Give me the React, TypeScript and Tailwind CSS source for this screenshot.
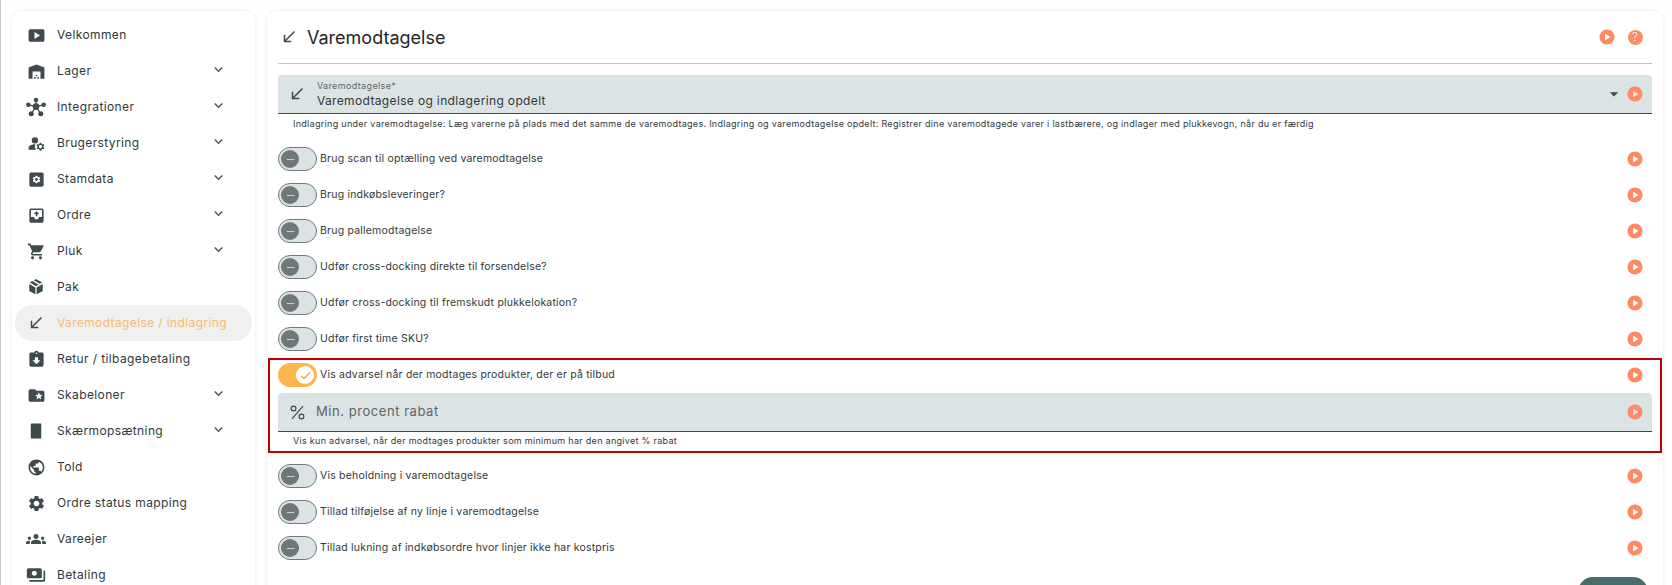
import type { ReactNode } from "react"
import {
  MdSmartDisplay,
  MdWarehouse,
  MdManageAccounts,
  MdShoppingCart,
  MdCallReceived,
  MdAssignmentReturned,
  MdFolderSpecial,
  MdPublic,
  MdSettings,
  MdGroups,
  MdPayments,
  MdRemove,
  MdCheck,
  MdPlayCircle,
  MdExpandMore,
  MdArrowDropDown,
} from "react-icons/md"

const gearPath =
  "M19.14 12.94c.04-.3.06-.61.06-.94 0-.32-.02-.64-.07-.94l2.03-1.58c.18-.14.23-.41.12-.61l-1.92-3.32c-.12-.22-.37-.29-.59-.22l-2.39.96c-.5-.38-1.03-.7-1.62-.94l-.36-2.54c-.04-.24-.24-.41-.48-.41h-3.84c-.24 0-.43.17-.47.41l-.36 2.54c-.59.24-1.13.57-1.62.94l-2.39-.96c-.22-.08-.47 0-.59.22L2.74 8.87c-.12.21-.08.47.12.61l2.03 1.58c-.05.3-.09.63-.09.94s.02.64.07.94l-2.03 1.58c-.18.14-.23.41-.12.61l1.92 3.32c.12.22.37.29.59.22l2.39-.96c.5.38 1.03.7 1.62.94l.36 2.54c.05.24.24.41.48.41h3.84c.24 0 .44-.17.47-.41l.36-2.54c.59-.24 1.13-.56 1.62-.94l2.39.96c.22.08.47 0 .59-.22l1.92-3.32c.12-.22.07-.47-.12-.61l-2.01-1.58zM12 15.6c-1.98 0-3.6-1.62-3.6-3.6s1.62-3.6 3.6-3.6 3.6 1.62 3.6 3.6-1.62 3.6-3.6 3.6z"

function HubIcon() {
  return (
    <svg viewBox="0 0 24 24" className="w-[20px] h-[20px]" fill="#3f4a4d" stroke="#3f4a4d" strokeWidth="1.5">
      <path d="M12 11.500V4M12 11.500L3 9.500M12 11.500L21 9.500M12 11.500L6.500 20M12 11.500L17.500 20" fill="none" />
      <circle cx="12" cy="3.500" r="2.700" stroke="none" />
      <circle cx="2.800" cy="9.300" r="2.700" stroke="none" />
      <circle cx="21.200" cy="9.300" r="2.700" stroke="none" />
      <circle cx="6.300" cy="20" r="3" stroke="none" />
      <circle cx="17.700" cy="20" r="3" stroke="none" />
      <circle cx="12" cy="11.500" r="4" stroke="none" />
    </svg>
  )
}

function StamdataIcon() {
  return (
    <svg viewBox="0 0 24 24" className="w-[19px] h-[19px]">
      <rect x="3" y="3" width="18" height="18" rx="2" fill="#3f4a4d" />
      <g transform="translate(6 6) scale(0.5)" fill="#fff">
        <path d={gearPath} />
      </g>
    </svg>
  )
}

function OutboxIcon() {
  return (
    <svg viewBox="0 0 24 24" className="w-[19px] h-[19px]" fill="#3f4a4d">
      <path
        fillRule="evenodd"
        d="M5 3h14a2 2 0 0 1 2 2v14a2 2 0 0 1-2 2H5a2 2 0 0 1-2-2V5a2 2 0 0 1 2-2zM5 5v9h4c0 1.600 1.400 3 3 3s3-1.400 3-3h4V5z"
      />
      <path d="M12 6.500 8.500 10H11v3h2v-3h2.500z" />
    </svg>
  )
}

function BoxIcon() {
  return (
    <svg viewBox="0 0 24 24" className="w-[18px] h-[18px]" fill="#3f4a4d">
      <path d="M11.200 12.600 3 8v8.600c0 .4.200.7.500.9l7.700 4.300zM12.800 12.600v9.200l7.700-4.300c.3-.2.500-.5.500-.9V8zM12 1.600c-.2 0-.3 0-.5.1L9 3.100l8 4.600 3.200-1.800-7.700-4.200c-.2-.1-.3-.1-.5-.1zM7.300 4 3.800 5.900 12 10.900l3.400-2z" />
    </svg>
  )
}

function PanelIcon() {
  return (
    <svg viewBox="0 0 24 24" className="w-[18px] h-[18px]" fill="#3f4a4d">
      <path d="M5 3.500C5 2.700 5.700 2 6.500 2H19v20H6.500C5.700 22 5 21.300 5 20.500z" />
    </svg>
  )
}

function PercentIcon() {
  return (
    <svg viewBox="0 0 24 24" className="w-[19px] h-[19px] mr-[9px]" fill="none" stroke="#3f4a4d" strokeWidth="1.500">
      <circle cx="7" cy="7" r="3" />
      <circle cx="17" cy="17" r="3" />
      <path d="M19 4 5 20" />
    </svg>
  )
}

const menu: { label: string; icon: ReactNode; open?: boolean; active?: boolean }[] = [
  { label: "Velkommen", icon: <MdSmartDisplay size={19} /> },
  { label: "Lager", icon: <MdWarehouse size={19} />, open: true },
  { label: "Integrationer", icon: <HubIcon />, open: true },
  { label: "Brugerstyring", icon: <MdManageAccounts size={19} />, open: true },
  { label: "Stamdata", icon: <StamdataIcon />, open: true },
  { label: "Ordre", icon: <OutboxIcon />, open: true },
  { label: "Pluk", icon: <MdShoppingCart size={19} />, open: true },
  { label: "Pak", icon: <BoxIcon /> },
  { label: "Varemodtagelse / indlagring", icon: <MdCallReceived size={18} />, active: true },
  { label: "Retur / tilbagebetaling", icon: <MdAssignmentReturned size={19} /> },
  { label: "Skabeloner", icon: <MdFolderSpecial size={19} />, open: true },
  { label: "Skærmopsætning", icon: <PanelIcon />, open: true },
  { label: "Told", icon: <MdPublic size={19} /> },
  { label: "Ordre status mapping", icon: <MdSettings size={19} /> },
  { label: "Vareejer", icon: <MdGroups size={20} /> },
  { label: "Betaling", icon: <MdPayments size={20} /> },
]

function PlayButton() {
  return <MdPlayCircle size={18} className="text-[#ff8a65] shrink-0" />
}

function Toggle({ on }: { on?: boolean }) {
  if (on) {
    return (
      <span className="w-[39px] h-[24px] rounded-full bg-[#ffb54f] flex items-center justify-end pr-[3px] shrink-0">
        <span className="w-[18px] h-[18px] rounded-full bg-white flex items-center justify-center text-[#f5891f]">
          <MdCheck size={13} />
        </span>
      </span>
    )
  }
  return (
    <span className="w-[39px] h-[24px] rounded-full bg-[#dce3e4] border border-[#6f7a7c] flex items-center pl-[2px] shrink-0">
      <span className="w-[18px] h-[18px] rounded-full bg-[#6f7779] flex items-center justify-center text-[#c5cccd]">
        <MdRemove size={13} />
      </span>
    </span>
  )
}

function ToggleRow({ label, on }: { label: string; on?: boolean }) {
  return (
    <div className="h-[36px] flex items-center gap-[3px] shrink-0">
      <Toggle on={on} />
      <span className="text-[10.5px] tracking-[0.2px] text-[#2f383a] flex-1">{label}</span>
      <span className="pr-[8px] flex">
        <PlayButton />
      </span>
    </div>
  )
}

export default function App() {
  return (
    <div className="h-[585px] overflow-hidden bg-[#fefefe] border-l border-[#c8c8c8] pl-[11px] pr-[9px] pt-[11px] flex gap-[12px] font-['Inter',sans-serif]">
      <aside className="w-[243px] h-[600px] shrink-0 bg-white rounded-[10px] shadow-[0_0_4px_rgba(0,0,0,0.08)] pt-[6px] px-[3px]">
        {menu.map((item) => (
          <div
            key={item.label}
            className={`h-[36px] flex items-center rounded-full pl-[9px] pr-[25px] ${item.active ? "bg-[#f0f0f0]" : ""}`}
          >
            <span className="w-[24px] flex justify-center text-[#3f4a4d] mr-[9px]">{item.icon}</span>
            <span
              className={`flex-1 whitespace-nowrap text-[12px] tracking-[0.38px] ${item.active ? "text-[#ffb869]" : "text-[#2f383a]"}`}
            >
              {item.label}
            </span>
            {item.open && <MdExpandMore size={17} className="text-[#4a5456] -mt-[3px]" />}
          </div>
        ))}
      </aside>

      <main className="flex-1 h-[600px] bg-white rounded-[10px] shadow-[0_0_4px_rgba(0,0,0,0.08)] px-[11px]">
        <header className="h-[53px] flex items-center border-b border-[#b8c5c3] pl-[2px] pr-[8px]">
          <MdCallReceived size={18} className="text-[#3f4a4d] mr-[9px]" />
          <h1 className="flex-1 text-[18px] text-[#1f2628]">Varemodtagelse</h1>
          <span className="flex gap-[12px]">
            <PlayButton />
            <span className="w-[15px] h-[15px] mt-[1.5px] mr-[1.5px] rounded-full bg-[#ff8a65] text-white text-[11px] font-light leading-[15px] text-center">
              ?
            </span>
          </span>
        </header>

        <div className="mt-[11px] h-[39px] bg-[#dce3e4] border-b border-[#3f4a4d] rounded-t-[4px] flex items-center pl-[10px] pr-[8px]">
          <MdCallReceived size={18} className="text-[#3f4a4d] mr-[11px]" />
          <div className="flex-1 flex flex-col pt-[1px]">
            <span className="text-[9px] leading-[12px] tracking-[0.36px] text-[#5c6668]">Varemodtagelse*</span>
            <span className="text-[12px] leading-[18px] tracking-[0.35px] text-[#2f383a]">
              Varemodtagelse og indlagering opdelt
            </span>
          </div>
          <MdArrowDropDown size={20} className="text-[#3f4a4d] mr-[2px]" />
          <PlayButton />
        </div>
        <p className="pl-[15px] h-[19px] text-[9px] leading-[19px] tracking-[0.29px] text-[#2f383a]">
          Indlagring under varemodtagelse: Læg varerne på plads med det samme de varemodtages. Indlagring og
          varemodtagelse opdelt: Registrer dine varemodtagede varer i lastbærere, og indlager med plukkevogn, når du er
          færdig
        </p>

        <div className="mt-[8px]">
          <ToggleRow label="Brug scan til optælling ved varemodtagelse" />
          <ToggleRow label="Brug indkøbsleveringer?" />
          <ToggleRow label="Brug pallemodtagelse" />
          <ToggleRow label="Udfør cross-docking direkte til forsendelse?" />
          <ToggleRow label="Udfør cross-docking til fremskudt plukkelokation?" />
          <ToggleRow label="Udfør first time SKU?" />
        </div>

        <div className="mt-[1px] -mx-[10px] px-[8px] border-2 border-[#c00000] h-[95px] flex flex-col">
          <div className="-mt-[3px]">
            <ToggleRow label="Vis advarsel når der modtages produkter, der er på tilbud" on />
          </div>
          <div className="h-[39px] shrink-0 bg-[#dce3e4] border-b border-[#3f4a4d] rounded-t-[4px] flex items-center pl-[10px] pr-[8px]">
            <PercentIcon />
            <span className="flex-1 text-[13px] tracking-[0.55px] text-[#5c6668]">Min. procent rabat</span>
            <PlayButton />
          </div>
          <p className="pl-[15px] text-[9px] leading-[18px] tracking-[0.29px] text-[#2f383a]">
            Vis kun advarsel, når der modtages produkter som minimum har den angivet % rabat
          </p>
        </div>

        <div className="mt-[5px]">
          <ToggleRow label="Vis beholdning i varemodtagelse" />
          <ToggleRow label="Tillad tilføjelse af ny linje i varemodtagelse" />
          <ToggleRow label="Tillad lukning af indkøbsordre hvor linjer ikke har kostpris" />
        </div>

        <div className="flex justify-end mt-[11px] pr-[4px]">
          <span className="w-[70px] h-[30px] rounded-full bg-[#4a6b6b]" />
        </div>
      </main>
    </div>
  )
}
